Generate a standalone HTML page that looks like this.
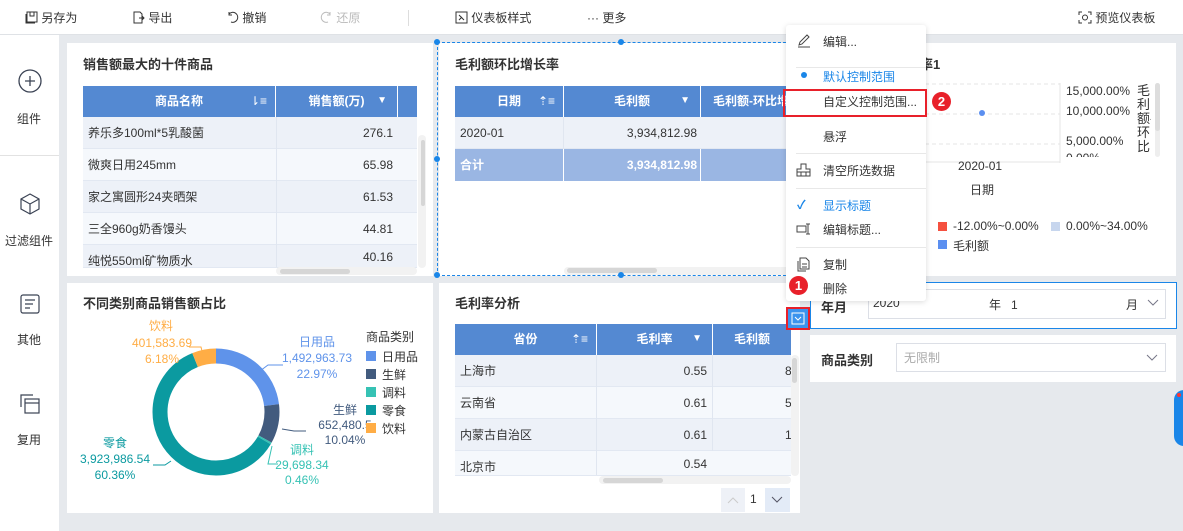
<!DOCTYPE html>
<html><head><meta charset="utf-8"><style>
*{margin:0;padding:0;box-sizing:border-box}
body{width:1183px;height:531px;overflow:hidden;background:#e6e9ed;font-family:"Liberation Sans","Noto Sans CJK SC",sans-serif;font-size:12px;color:#333;position:relative}
.a{position:absolute;white-space:nowrap}
.top{left:0;top:0;width:1183px;height:35px;background:#fff;border-bottom:1px solid #dfe2e6}
.side{left:0;top:35px;width:59px;height:496px;background:#fff}
.p{position:absolute;background:#fff}
.t{font-size:13px;font-weight:bold;color:#333}
.th{background:#5489d2;color:#fff;font-weight:bold;text-align:center;line-height:30px}
.row{position:absolute;height:32px;line-height:32px;border-bottom:1px solid #e2e8f2}
.mi{position:absolute;left:37px;color:#333}
.sep{position:absolute;left:10px;right:0;height:1px;background:#e8e8e8}
</style></head><body>
<div class="a top"></div>
<!-- toolbar -->
<div class="a" style="left:25px;top:9px">
<svg width="13" height="13" viewBox="0 0 13 13" style="vertical-align:-2px"><rect x="2" y="1" width="10" height="10" fill="none" stroke="#333"/><path d="M1 3v9h9M5 1v4h4V1" fill="none" stroke="#333"/></svg> 另存为</div>
<div class="a" style="left:132px;top:9px"><svg width="13" height="13" viewBox="0 0 13 13" style="vertical-align:-2px"><path d="M2 1h6l2 2v9H2z M7 7h5M10 5l2 2-2 2" fill="none" stroke="#333"/></svg> 导出</div>
<div class="a" style="left:226px;top:9px"><svg width="13" height="13" viewBox="0 0 13 13" style="vertical-align:-2px"><path d="M3 3a5 5 0 1 1 2 8M3 1v3h3" fill="none" stroke="#333"/></svg> 撤销</div>
<div class="a" style="left:320px;top:9px;color:#bbb"><svg width="13" height="13" viewBox="0 0 13 13" style="vertical-align:-2px"><path d="M10 3a5 5 0 1 0-2 8M10 1v3H7" fill="none" stroke="#bbb"/></svg> 还原</div>
<div class="a" style="left:408px;top:10px;width:1px;height:16px;background:#ddd"></div>
<div class="a" style="left:455px;top:9px"><svg width="13" height="13" viewBox="0 0 13 13" style="vertical-align:-2px"><rect x="1" y="1" width="11" height="11" fill="none" stroke="#333"/><path d="M4 4l5 5M4 9l3-3" stroke="#333"/></svg> 仪表板样式</div>
<div class="a" style="left:587px;top:9px">··· 更多</div>
<div class="a" style="left:1078px;top:9px"><svg width="14" height="13" viewBox="0 0 14 13" style="vertical-align:-2px"><path d="M1 4V1h3M10 1h3v3M13 9v3h-3M4 12H1V9" fill="none" stroke="#333"/><circle cx="7" cy="6.5" r="2.5" fill="none" stroke="#333"/></svg> 预览仪表板</div>
<!-- sidebar -->
<div class="a side"></div>
<div class="a" style="left:0;top:155px;width:59px;height:1px;background:#e2e2e2"></div>
<svg class="a" style="left:18px;top:69px" width="24" height="24"><circle cx="12" cy="12" r="11" fill="none" stroke="#3b4354" stroke-width="1.3"/><path d="M12 7v10M7 12h10" stroke="#3b4354" stroke-width="1.3"/></svg>
<div class="a" style="left:17px;top:110px">组件</div>
<svg class="a" style="left:20px;top:193px" width="20" height="22"><path d="M10 1l9 5v10l-9 5-9-5V6z M1 6l9 5 9-5M10 11v10" fill="none" stroke="#3b4354" stroke-width="1.2"/></svg>
<div class="a" style="left:5px;top:232px">过滤组件</div>
<svg class="a" style="left:20px;top:294px" width="20" height="20"><rect x="1" y="1" width="18" height="18" rx="2" fill="none" stroke="#3b4354" stroke-width="1.2"/><path d="M5 6h10M5 10h8M5 14h5" stroke="#3b4354" stroke-width="1.2"/></svg>
<div class="a" style="left:17px;top:331px">其他</div>
<svg class="a" style="left:20px;top:393px" width="20" height="22"><path d="M1 14V2h12" fill="none" stroke="#3b4354" stroke-width="1.2"/><rect x="5" y="6" width="14" height="14" fill="none" stroke="#3b4354" stroke-width="1.2"/><path d="M5 10h14" stroke="#3b4354" stroke-width="1.2"/></svg>
<div class="a" style="left:17px;top:431px">复用</div>

<!-- panel 1 -->
<div class="p" style="left:67px;top:43px;width:366px;height:233px;overflow:hidden">
<div class="a t" style="left:16px;top:11px">销售额最大的十件商品</div>
<div class="a th" style="left:16px;top:43px;width:192px;height:31px">商品名称<span style="position:absolute;right:8px;font-weight:normal">⇂≡</span></div>
<div class="a th" style="left:209px;top:43px;width:121px;height:31px">销售额(万)<span style="position:absolute;right:10px;font-size:10px">▼</span></div>
<div class="a th" style="left:331px;top:43px;width:19px;height:31px"></div>
<div class="row" style="left:16px;top:74px;width:334px;background:#edf1f8"><span style="margin-left:5px">养乐多100ml*5乳酸菌</span><span class="a" style="left:193px;top:0;width:1px;height:32px;background:#e0e6f0"></span><span class="a" style="right:24px">276.1</span></div>
<div class="row" style="left:16px;top:106px;width:334px;background:#f5f8fc"><span style="margin-left:5px">微爽日用245mm</span><span class="a" style="left:193px;top:0;width:1px;height:32px;background:#e0e6f0"></span><span class="a" style="right:24px">65.98</span></div>
<div class="row" style="left:16px;top:138px;width:334px;background:#edf1f8"><span style="margin-left:5px">家之寓圆形24夹晒架</span><span class="a" style="left:193px;top:0;width:1px;height:32px;background:#e0e6f0"></span><span class="a" style="right:24px">61.53</span></div>
<div class="row" style="left:16px;top:170px;width:334px;background:#f5f8fc"><span style="margin-left:5px">三全960g奶香馒头</span><span class="a" style="left:193px;top:0;width:1px;height:32px;background:#e0e6f0"></span><span class="a" style="right:24px">44.81</span></div>
<div class="row" style="left:16px;top:202px;width:334px;height:23px;overflow:hidden;background:#edf1f8"><span style="margin-left:5px">纯悦550ml矿物质水</span><span class="a" style="left:193px;top:0;width:1px;height:32px;background:#e0e6f0"></span><span class="a" style="right:24px;top:-4px">40.16</span></div>
<div class="a" style="left:351px;top:92px;width:8px;height:133px;background:#f2f2f2;border-radius:4px"></div>
<div class="a" style="left:354px;top:97px;width:4px;height:66px;background:#d6d6d6;border-radius:2px"></div>
<div class="a" style="left:209px;top:224px;width:141px;height:8px;background:#f2f2f2;border-radius:4px"></div>
<div class="a" style="left:213px;top:226px;width:70px;height:5px;background:#d6d6d6;border-radius:3px"></div>
</div>

<!-- panel 2 -->
<div class="p" style="left:439px;top:43px;width:361px;height:233px;overflow:hidden">
<div class="a t" style="left:16px;top:11px">毛利额环比增长率</div>
<div class="a th" style="left:16px;top:43px;width:108px;height:31px">日期<span style="position:absolute;right:8px;font-weight:normal">⇡≡</span></div>
<div class="a th" style="left:125px;top:43px;width:136px;height:31px">毛利额<span style="position:absolute;right:10px;font-size:10px">▼</span></div>
<div class="a th" style="left:262px;top:43px;width:100px;height:31px">毛利额-环比增</div>
<div class="row" style="left:16px;top:74px;width:346px;background:#edf1f8"><span style="margin-left:5px">2020-01</span><span class="a" style="left:108px;top:0;width:1px;height:32px;background:#e0e6f0"></span><span class="a" style="left:130px;width:112px;text-align:right">3,934,812.98</span></div>
<div class="row" style="left:16px;top:106px;width:346px;background:#9ab6e3;color:#fff;font-weight:bold;border:0"><span style="margin-left:5px">合计</span><span class="a" style="left:108px;top:0;width:1px;height:32px;background:#fff"></span><span class="a" style="left:245px;top:0;width:1px;height:32px;background:#fff"></span><span class="a" style="left:130px;width:112px;text-align:right">3,934,812.98</span></div>
<div class="a" style="left:125px;top:224px;width:236px;height:8px;background:#f2f2f2;border-radius:4px"></div>
<div class="a" style="left:128px;top:225px;width:90px;height:5px;background:#d6d6d6;border-radius:3px"></div>
</div>
<div class="a" style="left:437px;top:42px;width:364px;height:234px;border:1px dashed #1a86e8"></div>
<div class="a" style="left:434px;top:39px;width:6px;height:6px;border-radius:3px;background:#1a86e8"></div>
<div class="a" style="left:618px;top:39px;width:6px;height:6px;border-radius:3px;background:#1a86e8"></div>
<div class="a" style="left:434px;top:156px;width:6px;height:6px;border-radius:3px;background:#1a86e8"></div>
<div class="a" style="left:434px;top:272px;width:6px;height:6px;border-radius:3px;background:#1a86e8"></div>
<div class="a" style="left:618px;top:272px;width:6px;height:6px;border-radius:3px;background:#1a86e8"></div>

<!-- right top chart panel -->
<div class="p" style="left:810px;top:43px;width:366px;height:233px">
<div class="a t" style="left:110px;top:11px">率1</div>
<svg class="a" style="left:80px;top:40px" width="180" height="80"><path d="M0 1h170M0 31h170M0 61h170" stroke="#e4e4e4" stroke-dasharray="4 3"/><path d="M170 0v80M170 79h-170" stroke="#e4e4e4"/><circle cx="92" cy="30" r="3" fill="#5b8ff0"/></svg>
<div class="a" style="left:256px;top:41px;font-size:12px">15,000.00%</div>
<div class="a" style="left:256px;top:61px">10,000.00%</div>
<div class="a" style="left:256px;top:91px">5,000.00%</div>
<div class="a" style="left:256px;top:108px;height:6px;overflow:hidden">0.00%</div>
<div class="a" style="left:327px;top:41px;width:14px;font-size:13px;line-height:14px;white-space:normal;height:74px;overflow:hidden">毛利额-环比</div>
<div class="a" style="left:345px;top:40px;width:5px;height:74px;background:#eee;border-radius:3px"></div>
<div class="a" style="left:345px;top:40px;width:5px;height:48px;background:#ddd;border-radius:3px"></div>
<div class="a" style="left:148px;top:116px">2020-01</div>
<div class="a" style="left:160px;top:138px">日期</div>
<div class="a" style="left:128px;top:179px;width:9px;height:9px;background:#f5503f"></div>
<div class="a" style="left:143px;top:176px">-12.00%~0.00%</div>
<div class="a" style="left:241px;top:179px;width:9px;height:9px;background:#c7d6ee"></div>
<div class="a" style="left:256px;top:176px">0.00%~34.00%</div>
<div class="a" style="left:128px;top:197px;width:9px;height:9px;background:#5b8ff0"></div>
<div class="a" style="left:143px;top:194px">毛利额</div>
</div>

<!-- panel 3 donut -->
<div class="p" style="left:67px;top:283px;width:366px;height:230px">
<div class="a t" style="left:16px;top:10px">不同类别商品销售额占比</div>
<svg class="a" style="left:0;top:0" width="366" height="230">
<g transform="translate(149,129) rotate(-90)" fill="none" stroke-width="15">
<circle r="56" stroke="#5f93ea" stroke-dasharray="80.8 400" stroke-dashoffset="0"/>
<circle r="56" stroke="#425b7e" stroke-dasharray="35.3 400" stroke-dashoffset="-80.8"/>
<circle r="56" stroke="#36c2b4" stroke-dasharray="1.6 400" stroke-dashoffset="-116.1"/>
<circle r="56" stroke="#0b9aa0" stroke-dasharray="212.4 400" stroke-dashoffset="-117.7"/>
<circle r="56" stroke="#ffad45" stroke-dasharray="21.7 400" stroke-dashoffset="-330.1"/>
</g>
<path d="M193 88l8-6h15" stroke="#5f93ea" fill="none"/>
<path d="M215 146l12 2h12" stroke="#425b7e" fill="none"/>
<path d="M205 163l-4 18h10" stroke="#36c2b4" fill="none"/>
<path d="M104 178l-6 4h-12" stroke="#0b9aa0" fill="none"/>
<path d="M136 72l-2-8h-12" stroke="#ffad45" fill="none"/>
</svg>
<div class="a" style="left:72px;top:36px;width:44px;text-align:center;color:#ffad45;font-size:12px;line-height:14px">饮料</div>
<div class="a" style="left:58px;top:52px;width:74px;text-align:center;color:#ffad45;line-height:16px">401,583.69<br>6.18%</div>
<div class="a" style="left:210px;top:51px;width:80px;text-align:center;color:#5f93ea;line-height:16px">日用品<br>1,492,963.73<br>22.97%</div>
<div class="a" style="left:248px;top:120px;width:60px;text-align:center;color:#425b7e;line-height:15px">生鲜<br>652,480.5<br>10.04%</div>
<div class="a" style="left:200px;top:160px;width:70px;text-align:center;color:#36c2b4;line-height:15px">调料<br>29,698.34<br>0.46%</div>
<div class="a" style="left:8px;top:152px;width:80px;text-align:center;color:#0b9aa0;line-height:16px">零食<br>3,923,986.54<br>60.36%</div>
<div class="a" style="left:299px;top:45px">商品类别</div>
<div class="a" style="left:299px;top:65px;line-height:18px"><span style="display:inline-block;width:10px;height:10px;background:#5f93ea;margin-right:6px"></span>日用品<br><span style="display:inline-block;width:10px;height:10px;background:#425b7e;margin-right:6px"></span>生鲜<br><span style="display:inline-block;width:10px;height:10px;background:#36c2b4;margin-right:6px"></span>调料<br><span style="display:inline-block;width:10px;height:10px;background:#0b9aa0;margin-right:6px"></span>零食<br><span style="display:inline-block;width:10px;height:10px;background:#ffad45;margin-right:6px"></span>饮料</div>
</div>

<!-- panel 4 -->
<div class="p" style="left:439px;top:283px;width:361px;height:230px;overflow:hidden">
<div class="a t" style="left:16px;top:10px">毛利率分析</div>
<div class="a th" style="left:16px;top:41px;width:141px;height:31px">省份<span style="position:absolute;right:8px;font-weight:normal">⇡≡</span></div>
<div class="a th" style="left:158px;top:41px;width:115px;height:31px">毛利率<span style="position:absolute;right:10px;font-size:10px">▼</span></div>
<div class="a th" style="left:274px;top:41px;width:78px;height:31px">毛利额</div>
<div class="row" style="left:16px;top:72px;width:336px;background:#edf1f8"><span style="margin-left:5px">上海市</span><span class="a" style="left:141px;top:0;width:1px;height:32px;background:#e0e6f0"></span><span class="a" style="left:180px;width:72px;text-align:right">0.55</span><span class="a" style="left:257px;top:0;width:1px;height:32px;background:#e0e6f0"></span><span class="a" style="left:330px">8</span></div>
<div class="row" style="left:16px;top:104px;width:336px;background:#f5f8fc"><span style="margin-left:5px">云南省</span><span class="a" style="left:141px;top:0;width:1px;height:32px;background:#e0e6f0"></span><span class="a" style="left:180px;width:72px;text-align:right">0.61</span><span class="a" style="left:257px;top:0;width:1px;height:32px;background:#e0e6f0"></span><span class="a" style="left:330px">5</span></div>
<div class="row" style="left:16px;top:136px;width:336px;background:#edf1f8"><span style="margin-left:5px">内蒙古自治区</span><span class="a" style="left:141px;top:0;width:1px;height:32px;background:#e0e6f0"></span><span class="a" style="left:180px;width:72px;text-align:right">0.61</span><span class="a" style="left:257px;top:0;width:1px;height:32px;background:#e0e6f0"></span><span class="a" style="left:330px">1</span></div>
<div class="row" style="left:16px;top:168px;width:336px;height:25px;overflow:hidden;background:#f5f8fc"><span style="margin-left:5px">北京市</span><span class="a" style="left:141px;top:0;width:1px;height:32px;background:#e0e6f0"></span><span class="a" style="left:180px;width:72px;text-align:right;top:-3px">0.54</span></div>
<div class="a" style="left:352px;top:72px;width:8px;height:121px;background:#f2f2f2;border-radius:4px"></div>
<div class="a" style="left:353px;top:75px;width:5px;height:25px;background:#d6d6d6;border-radius:3px"></div>
<div class="a" style="left:160px;top:193px;width:192px;height:8px;background:#f2f2f2;border-radius:4px"></div>
<div class="a" style="left:164px;top:195px;width:60px;height:5px;background:#d6d6d6;border-radius:3px"></div>
<div class="a" style="left:282px;top:205px;width:24px;height:24px;background:#eef1f7"></div>
<svg class="a" style="left:288px;top:213px" width="12" height="8"><path d="M1 7l5-5 5 5" fill="none" stroke="#ccc"/></svg>
<div class="a" style="left:311px;top:209px">1</div>
<div class="a" style="left:326px;top:205px;width:25px;height:24px;background:#e3ebf7"></div>
<svg class="a" style="left:332px;top:213px" width="12" height="8"><path d="M1 1l5 5 5-5" fill="none" stroke="#556"/></svg>
</div>

<!-- filters -->
<div class="p" style="left:810px;top:282px;width:367px;height:47px;border:1px solid #1a86e8">
<div class="a" style="left:10px;top:14px;font-weight:bold;font-size:13px">年月</div>
<div class="a" style="left:57px;top:6px;width:298px;height:30px;border:1px solid #dcdfe6;background:#fff"></div>
<div class="a" style="left:62px;top:13px">2020</div>
<div class="a" style="left:178px;top:13px">年&nbsp;&nbsp;&nbsp;1</div>
<div class="a" style="left:315px;top:13px">月</div>
<svg class="a" style="left:336px;top:16px" width="12" height="8"><path d="M1 1l5 5 5-5" fill="none" stroke="#778"/></svg>
</div>
<div class="p" style="left:810px;top:335px;width:366px;height:47px">
<div class="a" style="left:11px;top:15px;font-weight:bold;font-size:13px">商品类别</div>
<div class="a" style="left:86px;top:8px;width:270px;height:29px;border:1px solid #dcdfe6"></div>
<div class="a" style="left:94px;top:14px;color:#aaa">无限制</div>
<svg class="a" style="left:336px;top:19px" width="12" height="8"><path d="M1 1l5 5 5-5" fill="none" stroke="#778"/></svg>
</div>
<div class="a" style="left:1174px;top:390px;width:20px;height:56px;border-radius:10px;background:#1a86e8"></div>
<div class="a" style="left:1177px;top:393px;width:4px;height:4px;border-radius:2px;background:#f33"></div>

<!-- context menu -->
<div class="p" style="left:786px;top:25px;width:140px;height:276px;box-shadow:0 1px 6px rgba(0,0,0,.15);border-radius:3px">
<svg class="a" style="left:11px;top:9px" width="14" height="14"><path d="M2 11l1-3 7-7 2 2-7 7zM1 13h12" fill="none" stroke="#444"/></svg>
<div class="mi" style="top:8px">编辑...</div>
<div class="sep" style="top:42px"></div>
<div class="a" style="left:15px;top:47px;width:6px;height:6px;border-radius:3px;background:#1a86e8"></div>
<div class="mi" style="top:43px;color:#1a86e8">默认控制范围</div>
<div class="mi" style="top:68px">自定义控制范围...</div>
<div class="mi" style="top:103px">悬浮</div>
<div class="sep" style="top:128px"></div>
<svg class="a" style="left:10px;top:138px" width="15" height="14"><path d="M5 1h5v5h4v7H1V6h4z M1 9h13M5 9v4M10 9v4" fill="none" stroke="#444"/></svg>
<div class="mi" style="top:137px">清空所选数据</div>
<div class="sep" style="top:163px"></div>
<div class="a" style="left:11px;top:171px;color:#1a86e8;font-weight:bold">✓</div>
<div class="mi" style="top:172px;color:#1a86e8">显示标题</div>
<svg class="a" style="left:10px;top:198px" width="15" height="12"><rect x="1" y="3" width="9" height="6" fill="none" stroke="#444"/><path d="M12 1v10M10 1h4M10 11h4" stroke="#444" fill="none"/></svg>
<div class="mi" style="top:196px">编辑标题...</div>
<div class="sep" style="top:222px"></div>
<svg class="a" style="left:10px;top:232px" width="14" height="15"><path d="M4 1h6l3 3v8H4z M2 4v10h8" fill="none" stroke="#444"/><path d="M6 7h5M6 10h5" stroke="#444"/></svg>
<div class="mi" style="top:231px">复制</div>
<div class="mi" style="top:255px">删除</div>
</div>
<div class="a" style="left:783px;top:89px;width:144px;height:28px;border:2.5px solid #e8202a"></div>
<div class="a" style="left:932px;top:92px;width:19px;height:19px;border-radius:10px;background:#e8202a;color:#fff;text-align:center;line-height:19px;font-weight:bold;font-size:13px">2</div>
<div class="a" style="left:789px;top:276px;width:19px;height:19px;border-radius:10px;background:#e8202a;color:#fff;text-align:center;line-height:19px;font-weight:bold;font-size:13px">1</div>
<div class="a" style="left:786px;top:307px;width:24px;height:23px;border:2.5px solid #e8202a;background:#3b93ee"></div>
<svg class="a" style="left:791px;top:312px" width="14" height="13"><rect x="1" y="1" width="12" height="11" fill="none" stroke="#fff"/><path d="M4 5l3 3 3-3" fill="none" stroke="#fff"/></svg>
</body></html>
